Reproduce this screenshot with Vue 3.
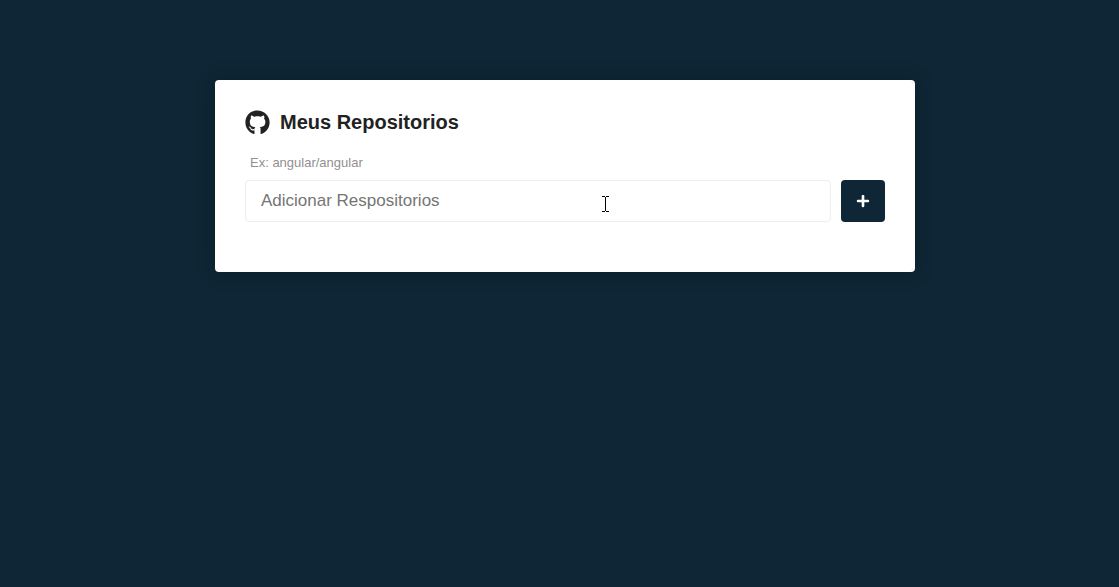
<script setup>
import { ref } from 'vue'

const repository = ref('')
</script>

<template>
  <main class="page">
    <section class="card">
      <h1 class="title">
        <svg class="github" viewBox="0 0 496 512" aria-hidden="true">
          <path d="M165.9 397.4c0 2-2.3 3.6-5.2 3.6-3.3.3-5.6-1.3-5.6-3.6 0-2 2.3-3.6 5.2-3.6 3-.3 5.6 1.3 5.6 3.6zm-31.1-4.5c-.7 2 1.3 4.3 4.3 4.9 2.6 1 5.6 0 6.2-2s-1.3-4.3-4.3-5.2c-2.6-.7-5.5.3-6.2 2.3zm44.2-1.7c-2.9.7-4.9 2.6-4.6 4.9.3 2 2.9 3.3 5.9 2.6 2.9-.7 4.9-2.6 4.6-4.6-.3-1.9-3-3.2-5.9-2.9zM244.8 8C106.1 8 0 113.3 0 252c0 110.9 69.8 205.8 169.5 239.2 12.8 2.3 17.3-5.6 17.3-12.1 0-6.2-.3-40.4-.3-61.4 0 0-70 15-84.7-29.8 0 0-11.4-29.1-27.8-36.6 0 0-22.9-15.7 1.6-15.4 0 0 24.9 2 38.6 25.8 21.9 38.6 58.6 27.5 72.9 20.9 2.3-16 8.8-27.1 16-33.7-55.9-6.2-112.3-14.3-112.3-110.5 0-27.5 7.6-41.3 23.6-58.9-2.6-6.5-11.1-33.3 2.6-67.9 20.9-6.5 69 27 69 27 20-5.6 41.5-8.5 62.8-8.5s42.8 2.9 62.8 8.5c0 0 48.1-33.6 69-27 13.7 34.7 5.2 61.4 2.6 67.9 16 17.7 25.8 31.5 25.8 58.9 0 96.5-58.9 104.2-114.8 110.5 9.2 7.9 17 22.9 17 46.4 0 33.7-.3 75.4-.3 83.6 0 6.5 4.6 14.4 17.3 12.1C428.2 457.8 496 362.9 496 252 496 113.3 383.5 8 244.8 8zM97.2 352.9c-1.3 1-1 3.3.7 5.2 1.6 1.6 3.9 2.3 5.2 1 1.3-1 1-3.3-.7-5.2-1.6-1.6-3.9-2.3-5.2-1zm-10.8-8.1c-.7 1.3.3 2.9 2.3 3.9 1.6 1 3.6.7 4.3-.7.7-1.3-.3-2.9-2.3-3.9-2-.6-3.6-.3-4.3.7zm32.4 35.6c-1.6 1.3-1 4.3 1.3 6.2 2.3 2.3 5.2 2.6 6.5 1 1.3-1.3.7-4.3-1.3-6.2-2.2-2.3-5.2-2.6-6.5-1zm-11.4-14.7c-1.6 1-1.6 3.6 0 5.9 1.6 2.3 4.3 3.3 5.6 2.3 1.6-1.3 1.6-3.9 0-6.2-1.4-2.3-4-3.3-5.6-2z" />
        </svg>
        Meus Repositorios
      </h1>
      <form class="form" @submit.prevent>
        <label class="hint" for="repository">Ex: angular/angular</label>
        <div class="row">
          <div class="field">
            <input id="repository" v-model="repository" class="input" type="text" placeholder="Adicionar Respositorios" />
            <svg class="pointer" viewBox="0 0 7 16" aria-hidden="true">
              <path d="M0 0h3v1H0zM4 0h3v1H4zM3 1h1v14H3zM0 15h3v1H0zM4 15h3v1H4z" />
            </svg>
          </div>
          <button class="add" type="submit" aria-label="Adicionar">
            <svg class="plus" viewBox="0 0 448 512" aria-hidden="true">
              <path d="M416 208H272V64c0-17.67-14.33-32-32-32h-32c-17.67 0-32 14.33-32 32v144H32c-17.67 0-32 14.33-32 32v32c0 17.67 14.33 32 32 32h144v144c0 17.67 14.33 32 32 32h32c17.67 0 32-14.33 32-32V304h144c17.67 0 32-14.33 32-32v-32c0-17.67-14.33-32-32-32z" />
            </svg>
          </button>
        </div>
      </form>
    </section>
  </main>
</template>

<style>
body {
  margin: 0;
  background: #0e2635;
}
</style>

<style scoped>
.page {
  padding: 80px 0 80px 11px;
  font-family: "Liberation Sans", Arial, sans-serif;
}

.card {
  box-sizing: border-box;
  max-width: 700px;
  margin: 0 auto;
  padding: 30px 30px 50px;
  border-radius: 4px;
  background: #fff;
  box-shadow: 0 0 20px rgba(0, 0, 0, 0.2);
}

.title {
  display: flex;
  align-items: center;
  gap: 10px;
  margin: 0;
  color: #222;
  font-size: 20px;
  line-height: 25px;
}

.github {
  width: 25px;
  height: 25px;
  fill: #222;
}

.form {
  margin-top: 18px;
}

.hint {
  display: block;
  padding-left: 5px;
  color: #918f8f;
  font-size: 13px;
  line-height: 20px;
}

.row {
  display: flex;
  gap: 10px;
  margin-top: 7px;
}

.field {
  position: relative;
  flex: 1;
}

.input {
  display: block;
  box-sizing: border-box;
  width: 100%;
  height: 42px;
  padding: 10px 15px;
  border: 1px solid #eee;
  border-radius: 4px;
  background: #fff;
  color: #222;
  font-family: inherit;
  font-size: 17px;
}

.input::placeholder {
  color: #757575;
}

.pointer {
  position: absolute;
  top: 16px;
  left: 357px;
  width: 7px;
  height: 16px;
  fill: #000;
  pointer-events: none;
}

.add {
  display: flex;
  align-items: center;
  justify-content: center;
  width: 44px;
  padding: 0;
  border: 0;
  border-radius: 4px;
  background: #0e2635;
}

.plus {
  width: 14px;
  height: 14px;
  fill: #fff;
}
</style>
